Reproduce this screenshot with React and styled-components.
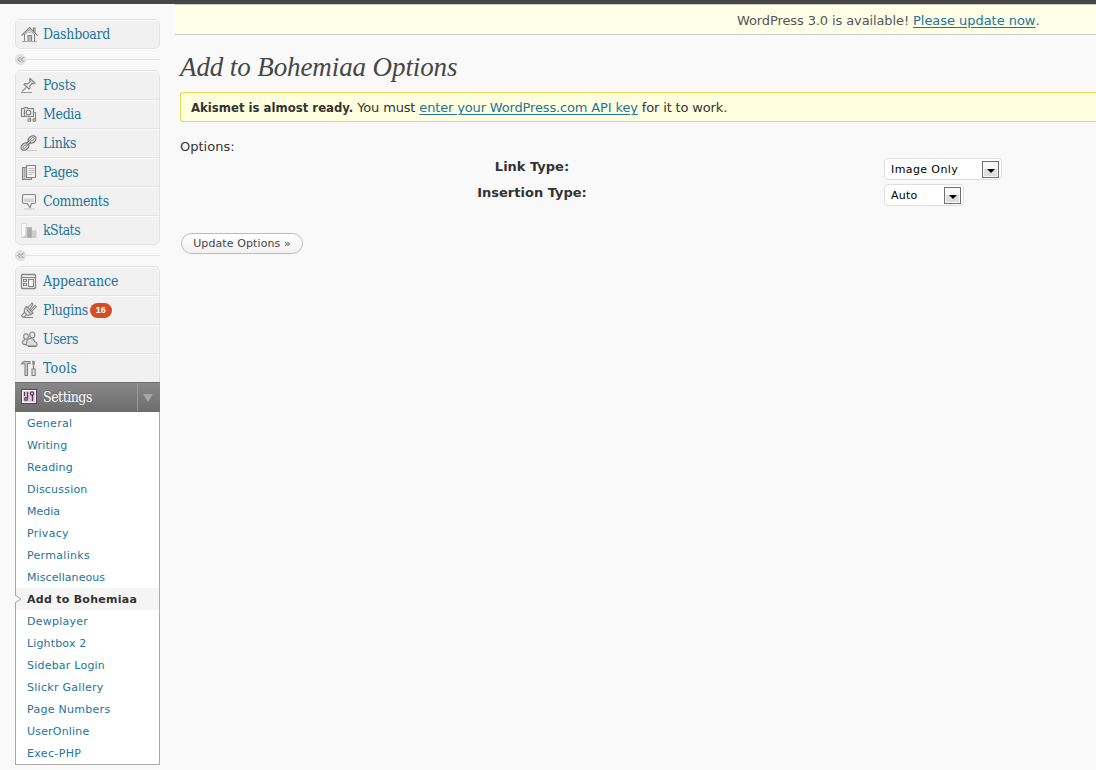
import React from "react";
import styled, { createGlobalStyle, css } from "styled-components";

const Global = createGlobalStyle`
  * { box-sizing: border-box; }
  html, body { margin: 0; background: #f9f9f9; }
  body {
    height: 770px; overflow: hidden; color: #333;
    font: 13px/18px Verdana, "DejaVu Sans", sans-serif;
  }
`;
const Page = styled.div`height: 770px; border-top: 4px solid #464646; overflow: hidden;`;
const Body = styled.div`display: flex; height: 766px;`;
const Sidebar = styled.nav`width: 145px; margin: 15px 15px 0; flex: none;`;
const Main = styled.main`flex: 1; min-width: 0;`;

const Group = styled.ul`
  list-style: none; margin: 0; padding: 0;
  border: 1px solid #e3e3e3; border-radius: 6px; background: #f1f1f1;
  ${(p) => p.$open && css`border-bottom: 0; border-radius: 6px 6px 0 0;`}
`;
const Item = styled.li`
  display: flex; align-items: center; height: 29px; padding: 1px 0 0 5px;
  box-shadow: inset 0 1px 0 #fbfbfb;
  border-bottom: 1px solid #e3e3e3;
  border-radius: ${(p) => (p.$first ? "5px 5px 0 0" : "0")};
  &:last-child { border-bottom: 0; height: 28px; padding-bottom: 0; }
`;
const ItemIcon = styled.svg`
  width: 17px; height: 17px; flex: none; margin: 0 5px 1px 0; overflow: visible;
  fill: none; stroke: #858585; stroke-width: 1.1;
`;
const ItemLabel = styled.a`
  color: #21759b; font: 14px/18px "DejaVu Serif Condensed", "DejaVu Serif", serif;
  letter-spacing: ${(p) => p.$track || 0}px; white-space: nowrap; padding-bottom: 2px;
`;
const Count = styled.span`
  margin: 0 0 0 2px; height: 15px; padding: 0 6px; border-radius: 8px;
  background: #d54e21; color: #fff; font: bold 9px/15px "Liberation Sans", sans-serif;
`;
const Separator = styled.div`
  display: flex; align-items: center; height: 21px;
  &::after { content: ""; flex: 1; height: 1px; background: #e3e3e3; }
`;
const Collapse = styled.span`
  display: flex; width: 11px; height: 11px; border-radius: 50%; background: #e0e0e0;
  svg { width: 11px; height: 11px; fill: none; stroke: #8a8a8a; }
`;
const Current = styled.div`
  display: flex; align-items: center; height: 30px; padding-left: 6px;
  border: solid #6d6d6d; border-width: 1px 0;
  background: linear-gradient(#888, #6d6d6d);
  ${ItemLabel} { color: #fff; flex: 1; padding-bottom: 0; text-shadow: 0 -1px 0 #666; }
`;
const Toggle = styled.span`
  display: flex; width: 23px; height: 28px; align-items: center; justify-content: center;
  border-left: 1px solid #999; padding-right: 2px;
  svg { width: 10px; height: 8px; fill: #a5a5a5; margin-top: 2px; }
`;
const Submenu = styled.ul`
  list-style: none; margin: 0; padding: 0; border: 1px solid #aaa; border-top: 0;
  background: #fff; font-size: 11px; line-height: 23px;
`;
const SubItem = styled.li`
  position: relative; height: 22px; padding-left: 11px; color: #21759b;
  letter-spacing: ${(p) => p.$track || 0}px; white-space: nowrap;
  ${(p) => p.$active && css`background: #f5f5f5; color: #333; font-weight: bold;`}
`;
const Notch = styled.svg`
  position: absolute; left: -1px; top: 7px; width: 7px; height: 8px; fill: #f9f9f9; stroke: #aaa;
`;

const Nag = styled.div`
  height: 31px; border: solid #ccc; border-width: 1px 0; background: #ffffe8;
  color: #555; line-height: 31px; padding-left: 562px; white-space: nowrap; letter-spacing: -0.11px;
  a { letter-spacing: -0.04px; }
`;
const Anchor = styled.a`color: #21759b; text-decoration: underline; text-underline-offset: 2px; text-decoration-thickness: 1px;`;
const Content = styled.div`padding-left: 5px;`;
const Title = styled.h1`
  margin: 0; padding-top: 14px; height: 57px; color: #464646; white-space: nowrap;
  font: italic 27px/36px "Liberation Serif", serif; letter-spacing: -0.1px;
`;
const Notice = styled.div`
  height: 30px; border: 1px solid #e6db55; border-right: 0; border-radius: 3px 0 0 3px;
  background: #ffffe0; padding: 0 10px; line-height: 29px; white-space: nowrap; letter-spacing: -0.15px;
  b { font-family: "DejaVu Sans Condensed", "DejaVu Sans", sans-serif; letter-spacing: 0; }
`;
const Intro = styled.p`margin: 15px 0 0; line-height: 19px;`;
const Form = styled.div`display: grid; grid-template-columns: 704px 1fr; grid-auto-rows: 26px;`;
const FieldName = styled.label`font-weight: bold; text-align: center; line-height: 22px;`;
const Select = styled.div`
  display: flex; align-items: flex-start; justify-content: space-between; margin-top: 2px;
  width: ${(p) => p.$width}px; height: 22px; padding: 0 2px 0 6px; line-height: 21px;
  border: 1px solid #dfdfdf; border-radius: 4px; background: #fff; color: #000; font-size: 11px;
  letter-spacing: ${(p) => p.$track}px;
`;
const Arrow = styled.span`
  display: flex; width: 17px; height: 17px; margin-top: 2px; border: 1px solid #707070;
  background: linear-gradient(#f8f8f8 0 45%, #ddd 45%); box-shadow: inset 0 0 0 1px #f7f7f7;
  svg { width: 15px; height: 15px; fill: #000; }
`;
const Button = styled.button`
  display: block; margin: 25px 0 0 1px; width: 122px; height: 21px; padding: 1px 0 0;
  border: 1px solid #bbb; border-radius: 11px; background: linear-gradient(#fff, #f2f2f2);
  color: #464646; font: 11px/18px Verdana, "DejaVu Sans", sans-serif; white-space: nowrap; letter-spacing: 0.1px;
`;

const icons = {
  home: <><path d="M.5 9.500 8.500 1.500 16.500 9.500M3.500 8v7.500h10V8M12.500 5V2h1.500v4.500" /><path d="M4 8 8.500 3.500 13 8" stroke="#aaa" /><path d="M7 15V9.500h3.500V15" fill="#bbb" /><path d="M7.500 6.500h2M1 15.500h15" stroke="#aaa" /></>,
  pin: <><path d="m9 1.500 5 4.500-1.500 1-1.500-.5-2 2.500v2.500l-1 .5L3 7.500 4 6.500l3 .2L9.300 4.500 8.500 3Z" fill="#e0e0e0" /><path d="M5.500 10 1 14.500M0 15.500h11" stroke="#999" /></>,
  media: <><path d="M.5 2.500h2l1-1h3v1h6v8H.500Z" fill="#e4e4e4" /><circle cx="7.500" cy="6.500" r="2.300" fill="#f6f6f6" /><path d="M3.500 3v7" /><path d="M14.500 14V6.500h-1M9.500 14v-2.500" /><circle cx="8.300" cy="14" r="1.400" fill="#ddd" /><circle cx="13.300" cy="14" r="1.400" fill="#ddd" /></>,
  link: <><g fill="#ddd" stroke="#777" strokeWidth="1.2"><ellipse cx="11" cy="4.500" rx="4.300" ry="3.300" transform="rotate(-40 11 4.500)" /><ellipse cx="4" cy="11.500" rx="4.300" ry="3.300" transform="rotate(-40 4 11.500)" /></g><g fill="#f1f1f1" stroke="#888" strokeWidth=".9"><ellipse cx="11.300" cy="4.200" rx="2" ry="1.200" transform="rotate(-40 11.300 4.200)" /><ellipse cx="3.700" cy="11.800" rx="2" ry="1.200" transform="rotate(-40 3.700 11.800)" /></g><path d="M5.500 9.800 9.300 6.200" stroke="#777" strokeWidth="3" /><path d="M5.500 9.800 9.300 6.200" stroke="#e4e4e4" strokeWidth="1" /><path d="M6 15.500h10" stroke="#ccc" /></>,
  pages: <><path d="M5.500 3.500h-4v12h9v-2" fill="#ccc" /><path d="M5.500 1.500h9v12h-9Z" fill="#f4f4f4" /><path d="M7.500 4.500h6M7.500 6.500h6M7.500 8.500h6M7.500 10.500h4" stroke="#bbb" /><path d="M3.500 4v10" stroke="#aaa" /></>,
  comments: <><path d="M3 1.500h10q1.500 0 1.500 1.500v6q0 1.500-1.500 1.500h-2.500l-1.500 4-3-4H3Q1.500 10.500 1.500 9V3Q1.500 1.500 3 1.500Z" fill="#f1f1f1" /><path d="M3 5.500h10v3.500H3Z" fill="#d5d5d5" stroke="none" /><path d="M3 16h11" stroke="#ccc" /></>,
  stats: <><path d="M.5 1.500h5v14h-5Z" fill="#fafafa" stroke="#ddd" /><path d="M1 15.500h14V9h-4" fill="#ccc" stroke="#ccc" /><path d="M6.500 5.500h4v10h-4Z" fill="#aaa" stroke="#b5b5b5" /><path d="M5 5v10" stroke="#ccc" /></>,
  appearance: <><rect x=".5" y="1.500" width="14" height="14" rx="1" fill="#f6f6f6" strokeWidth="1.300" /><path d="M1 4.500h13" strokeWidth="1.200" /><path d="M2.500 6.500h3v2h-3ZM2.500 10.500h3v2h-3ZM7.500 6.500h5v7h-5Z" /></>,
  plug: <><path d="M5.500 4.500 12 11Q9 13.800 6 13L3.500 10.500Q2.500 7.500 5.500 4.500Z" fill="#e2e2e2" /><path d="M7 5.500 11 1l1 1-3.200 5M9.800 8.200 14 3.500l1.300 1L11 9.500M5.500 7.500l4 4M3.800 10.200.5 13.500l1.500 2L5.800 12.700M3 15.500h9" /></>,
  users: <><ellipse cx="11.300" cy="4" rx="2.500" ry="3" fill="#e8e8e8" /><ellipse cx="5" cy="5.500" rx="2.300" ry="2.800" fill="#e8e8e8" /><path d="M4.500 8.500Q1.500 9 1.500 11.500T5 13.500M9.500 7.500q4 0 4 3 4 1.500 2 4.500H8Q4.500 14.500 5.500 12 6 7.500 9.500 7.500Z" fill="#ddd" /><path d="M7 15.500h8" stroke="#777" /></>,
  tools: <><path d="M.5 4Q2 .8 5 1.500H9V3.500H6.500V15.500H4V4L2.500 3.500Z" fill="#ccc" /><path d="M12.500 5v4" strokeWidth="1.300" /><path d="M12.500 .8v4" strokeWidth="2.400" /><path d="M11 9h3.200v6.500H11Z" fill="#ddd" /></>,
  settings: <><rect x="0" y="1" width="16" height="15" fill="#583358" stroke="none" /><rect x="1.500" y="2.500" width="13" height="12" fill="#dcc8dc" stroke="#fff" /><g stroke="#583358" strokeWidth="1.200"><path d="M6.500 4v6M11.500 7v6M3.500 4v4" /><circle cx="5" cy="11" r="1.400" /><circle cx="11" cy="5.500" r="1.600" /></g></>,
};

function Icon({ name }) {
  return <ItemIcon viewBox="0 0 17 17">{icons[name]}</ItemIcon>;
}
function MenuGroup({ items, open }) {
  return (
    <Group $open={open}>
      {items.map(([label, icon, track, count], i) => (
        <Item key={label} $first={i === 0}>
          <Icon name={icon} />
          <ItemLabel $track={track}>{label}</ItemLabel>
          {count && <Count>{count}</Count>}
        </Item>
      ))}
    </Group>
  );
}
function Divider() {
  return <Separator><Collapse><svg viewBox="0 0 11 11"><path d="M5.500 3 3 5.500 5.500 8M8.500 3 6 5.500 8.500 8" /></svg></Collapse></Separator>;
}
function Dropdown({ width, track, children }) {
  return (
    <Select $width={width} $track={track}>
      {children}
      <Arrow><svg viewBox="0 0 15 15"><path d="M4 7h8L8 11Z" /></svg></Arrow>
    </Select>
  );
}

const content = [["Posts", "pin", -0.1], ["Media", "media", -0.35], ["Links", "link", -0.3], ["Pages", "pages", -0.4], ["Comments", "comments", -0.3], ["kStats", "stats", -0.55]];
const admin = [["Appearance", "appearance", -0.1], ["Plugins", "plug", -0.35, "16"], ["Users", "users", -0.4], ["Tools", "tools", 0.25]];
const settings = [["General", 0.28], ["Writing", 0.15], ["Reading", 0.18], ["Discussion", 0.2], ["Media", 0], ["Privacy", 0.28], ["Permalinks", 0.3], ["Miscellaneous", 0.08], ["Add to Bohemiaa", 0.28], ["Dewplayer", 0.25], ["Lightbox 2", 0.15], ["Sidebar Login", 0.22], ["Slickr Gallery", 0.28], ["Page Numbers", 0.28], ["UserOnline", 0.18], ["Exec-PHP", 0.35]];

export default function App() {
  return (
    <Page>
      <Global />
      <Body>
        <Sidebar>
          <MenuGroup items={[["Dashboard", "home", -0.25]]} />
          <Divider />
          <MenuGroup items={content} />
          <Divider />
          <MenuGroup items={admin} open />
          <Current>
            <Icon name="settings" />
            <ItemLabel $track={-0.5}>Settings</ItemLabel>
            <Toggle><svg viewBox="0 0 10 8"><path d="M0 0h10L5 8Z" /></svg></Toggle>
          </Current>
          <Submenu>
            {settings.map(([label, track]) => (
              <SubItem key={label} $track={track} $active={label === "Add to Bohemiaa"}>
                {label === "Add to Bohemiaa" && <Notch viewBox="0 0 7 8"><path d="M0 0 6 4 0 8" /></Notch>}
                {label}
              </SubItem>
            ))}
          </Submenu>
        </Sidebar>
        <Main>
          <Nag>WordPress 3.0 is available! <Anchor>Please update now</Anchor>.</Nag>
          <Content>
            <Title>Add to Bohemiaa Options</Title>
            <Notice><b>Akismet is almost ready.</b> You must <Anchor>enter your WordPress.com API key</Anchor> for it to work.</Notice>
            <Intro>Options:</Intro>
            <Form>
              <FieldName>Link Type:</FieldName>
              <Dropdown width={118} track={0.4}>Image Only</Dropdown>
              <FieldName>Insertion Type:</FieldName>
              <Dropdown width={80} track={0.25}>Auto</Dropdown>
            </Form>
            <Button>Update Options »</Button>
          </Content>
        </Main>
      </Body>
    </Page>
  );
}
